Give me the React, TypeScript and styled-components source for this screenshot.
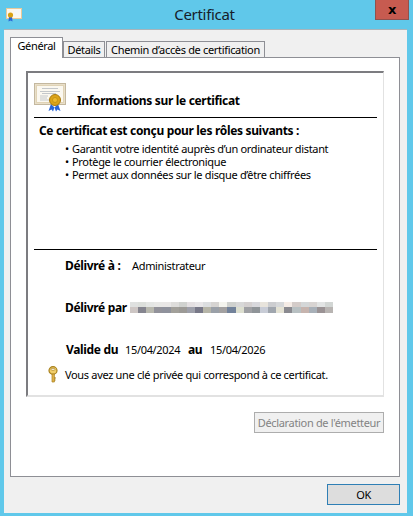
import React from "react";
import styled, { createGlobalStyle } from "styled-components";

const Global = createGlobalStyle`
  html, body { margin: 0; padding: 0; }
  body { font-family: "Noto Sans", "Open Sans", "Liberation Sans", sans-serif; font-size: 11px; letter-spacing: -0.33px; color: #000; }
`;

const Win = styled.div`
  width: 413px; height: 516px; box-sizing: border-box;
  background: #60c8ea; padding: 0 6px 3px 4px;
  display: flex; flex-direction: column; overflow: hidden;
`;
const TitleBar = styled.div`
  position: relative; height: 29px; flex: none;
  display: flex; align-items: center; justify-content: center;
`;
const TitleIcon = styled.svg`
  position: absolute; left: 2px; top: 8px;
`;
const Title = styled.div`
  font-size: 15px; letter-spacing: -0.3px; color: #16202a; margin-top: -1px; margin-left: -2px;
`;
const Close = styled.div`
  position: absolute; right: -2px; top: 0; width: 34px; height: 20px; box-sizing: border-box;
  background: #c75b50; border: 1px solid #8f524e; border-top: none;
  display: flex; align-items: center; justify-content: center;
  font-family: "DejaVu Sans", sans-serif; font-weight: 700; font-size: 13px; color: #000;
`;
const Body = styled.div`
  flex: 1; background: #f0f0f0; border-top: 1px solid #a9b4ba; padding: 7px 7px 8px 6px;
  display: flex; flex-direction: column;
`;
const TabStrip = styled.div`
  display: flex; align-items: flex-end; height: 21px; position: relative; z-index: 1; margin-bottom: -1px;
`;
const Tab = styled.div<{ $active?: boolean; $w: number }>`
  box-sizing: border-box; flex: none; width: ${p => p.$w}px; height: ${p => (p.$active ? 21 : 17)}px;
  padding-bottom: ${p => (p.$active ? 5 : 0)}px;
  margin-left: ${p => (p.$active ? 0 : 1)}px;
  background: ${p => (p.$active ? "#fff" : "#f0f0f0")};
  border: 1px solid #8e8f95; border-bottom: ${p => (p.$active ? "none" : "1px solid #8e8f95")};
  display: flex; align-items: center; justify-content: center; color: #000; white-space: nowrap;
  &:first-child { margin-left: 0; }
  &:nth-child(2) { margin-left: 0; }
`;
const Panel = styled.div`
  height: 420px; box-sizing: border-box; flex: none; background: #fff; border: 1px solid #8e8f95;
  padding: 13px 15px 0 15px;
`;
const InfoBox = styled.div`
  height: 326px; box-sizing: border-box;
  border-top: 2px solid #7c7c80; border-left: 2px solid #7c7c80;
  border-right: 1px solid #e2e2e2; border-bottom: 2px solid #e2e2e2;
  padding: 0 6px;
`;
const Header = styled.div`
  margin-top: 10px; height: 34px; display: flex; align-items: center; gap: 11px;
  border-bottom: 1px solid #000; box-sizing: content-box;
`;
const Bold = styled.span`
  font-size: 12px; font-weight: 700; letter-spacing: -0.33px; color: #000; white-space: nowrap;
`;
const Roles = styled.div`
  height: 132px; border-bottom: 1px solid #000; box-sizing: border-box; padding: 5px 0 0 5px;
`;
const RolesTitle = styled.div`
  line-height: 16px; margin-bottom: 3px;
`;
const List = styled.ul`
  list-style: none; margin: 0; padding: 0 0 0 26px;
`;
const Item = styled.li`
  line-height: 13px; height: 13px; white-space: nowrap; display: flex; color: #000;
  &::before { content: "•"; width: 7px; flex: none; }
`;
const Field = styled.div<{ $top: number; $left: number }>`
  display: flex; align-items: baseline; height: 16px; margin-top: ${p => p.$top}px; padding-left: ${p => p.$left}px;
  color: #000; white-space: nowrap;
`;
const Value = styled.span<{ $w?: number }>`
  flex: none; ${p => (p.$w ? `width: ${p.$w}px;` : "")}
`;
const Label = styled(Bold)<{ $w: number }>`
  flex: none; width: ${p => p.$w}px;
`;
const KeyRow = styled.div`
  display: flex; align-items: center; height: 17px; margin-top: 9px; padding-left: 14px; gap: 7px;
  color: #000; white-space: nowrap;
`;
const IssuerRow = styled.div`
  display: flex; justify-content: flex-end; margin-top: 15px;
`;
const IssuerButton = styled.div`
  width: 130px; height: 21px; box-sizing: border-box; background: #f0f0f0; border: 1px solid #adadad;
  display: flex; align-items: center; justify-content: center; color: #838383; white-space: nowrap;
`;
const Footer = styled.div`
  display: flex; justify-content: flex-end; margin-top: 7px;
`;
const OkButton = styled.div`
  width: 73px; height: 21px; box-sizing: border-box; background: #dddddd; border: 1px solid #2f7fb5;
  display: flex; align-items: center; justify-content: center; color: #000;
`;
const BlurSvg = styled.svg`
  align-self: center; flex: none;
`;
const CertSvg = styled.svg`
  flex: none; margin-bottom: 6px;
`;
const KeySvg = styled.svg`
  flex: none;
`;

const top = ["#dfe1e0","#dcdfdb","#e4e6e4","#e8e8e6","#e9e7e6","#dedddb","#d0d2cf","#e4e0e2","#e8e6e8","#dcdee0","#d6d4d2","#f4f4ee","#cfd1ce","#d8d8d8","#d4d0d0","#d8d8dc","#e8e4dc","#cccdd0","#d6d8da","#f5ece6","#d4ccc9","#d4d7d8","#d8d4d2","#e2e4e4","#d2d6d4"];
const bottom = ["#cdc6c4","#85858f","#b8b8ae","#92929a","#8f929c","#a2a09a","#9c9a96","#9ea0aa","#787888","#b6b5a8","#9aa0a8","#a3a1a1","#72829a","#dddfd0","#9fa0a4","#8f9498","#c8ccd6","#a0a6ae","#e4e2d4","#8a8a90","#b8c0c2","#c6b4ae","#a8b0b8","#9a9294","#b8b4b2"];

const Blur = () => (
  <BlurSvg width="203" height="11" shapeRendering="crispEdges">
    {top.map((c, i) => <rect key={i} x={i * 8.12} y={0} width={8.2} height={5} fill={c} />)}
    {bottom.map((c, i) => <rect key={i} x={i * 8.12} y={5} width={8.2} height={6} fill={c} />)}
  </BlurSvg>
);

const Cert = () => (
  <CertSvg width="32" height="29" viewBox="0 0 32 29">
    <rect x="0.5" y="0.5" width="31" height="21" fill="#e9dfc9" stroke="#c4b89f" />
    <rect x="2.5" y="2.5" width="27" height="17" fill="#fbf8f0" stroke="#e0d3b6" />
    <path d="M8 5.5h16M6 8.5h20M8 10.5h14M6 13h8M6 15h7M6 17h9" stroke="#c4c7ca" strokeWidth="1" />
    <path d="M17 21l-2.5 7 3-1.5 1.5 2 1.5-4zM24 21l2.5 7-3-1.5-1.5 2-1.5-4z" fill="#2a66d8" />
    <circle cx="21" cy="17" r="5.5" fill="#dca317" stroke="#a87a10" />
    <circle cx="21" cy="17" r="2.5" fill="#eeb92c" stroke="#b98a12" strokeWidth="0.7" />
  </CertSvg>
);

const SmallCert = () => (
  <TitleIcon width="16" height="14" viewBox="0 0 16 14">
    <rect x="0.5" y="0.5" width="15" height="10" fill="#fdf6ea" stroke="#e8c99a" />
    <rect x="8" y="2" width="6" height="6" fill="#f6f6f6" />
    <path d="M3 8.5l-.5 5 2-1 2 1-.5-5z" fill="#2a66d8" />
    <circle cx="4.5" cy="7" r="2.6" fill="#d9a012" />
  </TitleIcon>
);

const KeyIcon = () => (
  <KeySvg width="10" height="17" viewBox="0 0 10 17">
    <ellipse cx="5" cy="4.5" rx="4" ry="3.8" fill="#f0cd6a" stroke="#a8801c" strokeWidth="1.2" />
    <ellipse cx="5" cy="3.3" rx="2" ry="1" fill="#fff" stroke="#a8801c" strokeWidth="0.7" />
    <path d="M4 8h2.4v8H4z" fill="#e3b44a" stroke="#a8801c" strokeWidth="0.7" />
    <path d="M6 12h2M6 14h1.6" stroke="#a8801c" strokeWidth="1.2" />
  </KeySvg>
);

export default function App() {
  return (
    <>
      <Global />
      <Win>
        <TitleBar>
          <SmallCert />
          <Title>Certificat</Title>
          <Close>x</Close>
        </TitleBar>
        <Body>
          <TabStrip>
            <Tab $active $w={53}>Général</Tab>
            <Tab $w={42}>Détails</Tab>
            <Tab $w={159}>Chemin d’accès de certification</Tab>
          </TabStrip>
          <Panel>
            <InfoBox>
              <Header>
                <Cert />
                <Bold>Informations sur le certificat</Bold>
              </Header>
              <Roles>
                <RolesTitle><Bold>Ce certificat est conçu pour les rôles suivants :</Bold></RolesTitle>
                <List>
                  <Item>Garantit votre identité auprès d’un ordinateur distant</Item>
                  <Item>Protège le courrier électronique</Item>
                  <Item>Permet aux données sur le disque d’être chiffrées</Item>
                </List>
              </Roles>
              <Field $top={7} $left={31}>
                <Label $w={67}>Délivré à :</Label>
                <Value>Administrateur</Value>
              </Field>
              <Field $top={26} $left={31}>
                <Label $w={65}>Délivré par</Label>
                <Blur />
              </Field>
              <Field $top={26} $left={32}>
                <Label $w={59}>Valide du</Label>
                <Value $w={63}>15/04/2024</Value>
                <Label $w={22}>au</Label>
                <Value>15/04/2026</Value>
              </Field>
              <KeyRow>
                <KeyIcon />
                Vous avez une clé privée qui correspond à ce certificat.
              </KeyRow>
            </InfoBox>
            <IssuerRow>
              <IssuerButton>Déclaration de l'émetteur</IssuerButton>
            </IssuerRow>
          </Panel>
          <Footer>
            <OkButton>OK</OkButton>
          </Footer>
        </Body>
      </Win>
    </>
  );
}
